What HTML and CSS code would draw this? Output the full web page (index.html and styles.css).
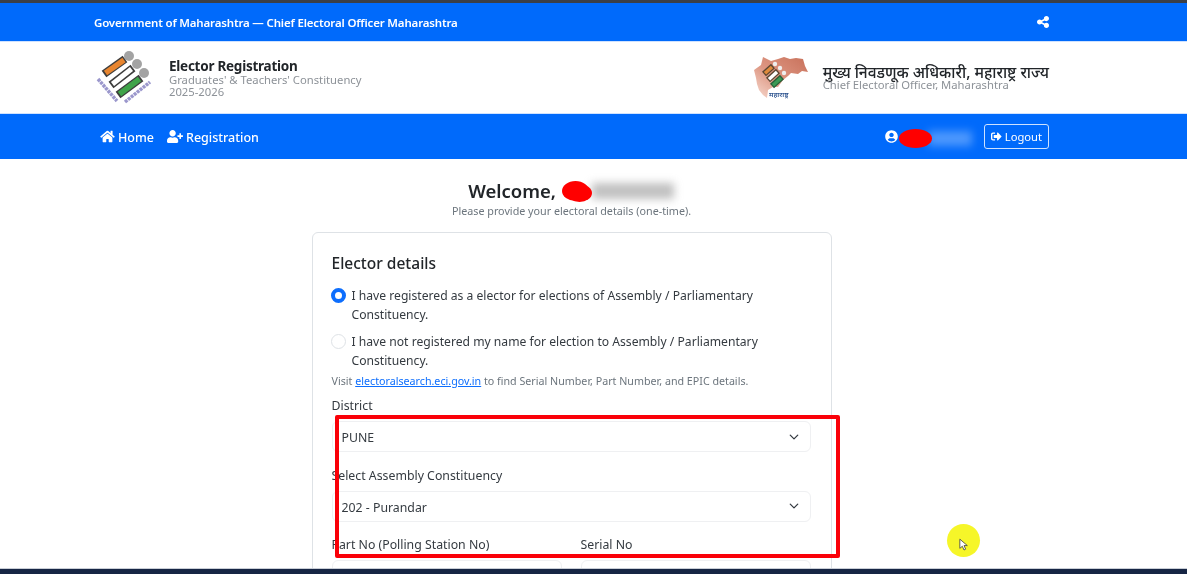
FILE: index.html
```html
<!DOCTYPE html>
<html lang="en">
<head>
<meta charset="utf-8">
<title>Elector Registration</title>
<link rel="stylesheet" href="styles.css">
</head>
<body>
<div class="page">
  <div class="topline"></div>
  <header class="gov">
    <div class="wrap gov-inner">
      <span class="gov-title">Government of Maharashtra — Chief Electoral Officer Maharashtra</span>
      <svg class="share" viewBox="0 0 448 512" width="12" height="14"><path fill="#fff" d="M352 224c53 0 96-43 96-96s-43-96-96-96-96 43-96 96c0 4 .2 8 .7 11.900l-94.100 47C145.400 170.200 121.900 160 96 160c-53 0-96 43-96 96s43 96 96 96c25.900 0 49.400-10.200 66.600-26.900l94.100 47c-.5 3.900-.7 7.800-.7 11.900 0 53 43 96 96 96s96-43 96-96-43-96-96-96c-25.900 0-49.400 10.200-66.600 26.900l-94.100-47c.5-3.900.7-7.800.7-11.900s-.2-8-.7-11.900l94.100-47C302.600 213.800 326.100 224 352 224z"/></svg>
    </div>
  </header>
  <section class="brand">
    <div class="wrap brand-inner">
      <div class="brand-left">
        <svg class="eci" viewBox="96 50 56 54" width="56" height="54">
          <g fill="#a3a3a3"><circle cx="129" cy="55" r="5"/><circle cx="137" cy="63" r="5"/><circle cx="144" cy="72" r="5"/></g>
          <g stroke-linecap="butt">
            <path d="M104 73 125 58" stroke="#3d3d3d" stroke-width="8"/><path d="M105.500 72 124 59" stroke="#e8852f" stroke-width="5.500"/>
            <path d="M111 84 133 67" stroke="#3d3d3d" stroke-width="8"/><path d="M112.500 83 131.500 68" stroke="#fff" stroke-width="5"/>
            <path d="M118 94 141 77" stroke="#3d3d3d" stroke-width="8"/><path d="M119.500 93 139.500 78" stroke="#3fa34a" stroke-width="5.500"/>
          </g>
          <g fill="none" stroke="#8a86c4" stroke-width="3.500" stroke-dasharray="3 .8" opacity=".85"><path d="M98 78 117 100"/><path d="M125 101 150 81"/></g>
        </svg>
        <div class="brand-text">
          <div class="brand-name">Elector Registration</div>
          <div class="brand-sub">Graduates' &amp; Teachers' Constituency</div>
          <div class="brand-sub">2025-2026</div>
        </div>
      </div>
      <div class="brand-right">
        <svg class="map" viewBox="752 54 58 48" width="58" height="48">
          <defs><linearGradient id="mapfill" x1="1" y1="0" x2="0" y2="1"><stop offset="0" stop-color="#c8705a"/><stop offset=".55" stop-color="#dd9682"/><stop offset="1" stop-color="#f8dcd2"/></linearGradient></defs>
          <path fill="url(#mapfill)" d="M753 70 760 65 762 57 770 61 777 59 783 57 789 59 795 58 802 59 804 66 807 72 801 71 797 74 790 73 787 76 782 80 777 87 772 87 767 90 766 98 762 95 758 90 756 84 755 78Z"/>
          <g stroke-linecap="butt">
            <path d="M763 74 772 66" stroke="#5a4632" stroke-width="6"/><path d="M764 73.200 771 67" stroke="#e08a3c" stroke-width="3.500"/>
            <path d="M767 80 777 71" stroke="#5a4632" stroke-width="6"/><path d="M768 79.200 776 72" stroke="#fff" stroke-width="3.500"/>
            <path d="M771 86 781 77" stroke="#27603a" stroke-width="6"/><path d="M772 85.200 780 78" stroke="#3a9a55" stroke-width="3.500"/>
          </g>
          <g fill="#eee"><circle cx="774" cy="64" r="2.200"/><circle cx="779" cy="68" r="2.200"/><circle cx="783" cy="73" r="2.200"/></g>
          <text x="768" y="97" class="map-label">महाराष्ट्र</text>
        </svg>
        <div class="brand-text office">
          <div class="office-name">मुख्य निवडणूक अधिकारी, महाराष्ट्र राज्य</div>
          <div class="brand-sub">Chief Electoral Officer, Maharashtra</div>
        </div>
      </div>
    </div>
  </section>
  <nav class="nav">
    <div class="wrap nav-inner">
      <div class="nav-links">
        <a class="nav-link">
          <svg viewBox="0 0 576 512" width="15" height="13"><path fill="#fff" d="M280.400 148.300 96 300.100V464a16 16 0 0 0 16 16l112-.3a16 16 0 0 0 15.900-16V368a16 16 0 0 1 16-16h64a16 16 0 0 1 16 16v95.600a16 16 0 0 0 16 16.100l112 .3a16 16 0 0 0 16-16V300L295.700 148.300a12.200 12.200 0 0 0-15.300 0zM571.600 251.500 488 182.600V44a12 12 0 0 0-12-12h-56a12 12 0 0 0-12 12v72.600L318.500 43a48 48 0 0 0-61 0L4.300 251.500a12 12 0 0 0-1.600 16.900l25.500 31A12 12 0 0 0 45.200 301l235.200-193.700a12.200 12.200 0 0 1 15.300 0L530.900 301a12 12 0 0 0 16.900-1.600l25.500-31a12 12 0 0 0-1.700-16.900z"/></svg>
          <span>Home</span>
        </a>
        <a class="nav-link">
          <svg viewBox="0 0 640 512" width="16" height="13"><path fill="#fff" d="M624 208h-64v-64c0-8.800-7.200-16-16-16h-32c-8.800 0-16 7.200-16 16v64h-64c-8.800 0-16 7.200-16 16v32c0 8.800 7.200 16 16 16h64v64c0 8.800 7.200 16 16 16h32c8.800 0 16-7.200 16-16v-64h64c8.800 0 16-7.200 16-16v-32c0-8.800-7.200-16-16-16zm-400 48c70.700 0 128-57.300 128-128S294.700 0 224 0 96 57.300 96 128s57.300 128 128 128zm89.600 32h-16.700c-22.200 10.200-46.900 16-72.900 16s-50.600-5.800-72.900-16h-16.700C60.200 288 0 348.200 0 422.400V464c0 26.500 21.500 48 48 48h352c26.500 0 48-21.500 48-48v-41.600c0-74.200-60.200-134.400-134.400-134.400z"/></svg>
          <span>Registration</span>
        </a>
      </div>
      <div class="nav-user">
        <svg viewBox="0 0 496 512" width="13" height="13"><path fill="#fff" d="M248 8C111 8 0 119 0 256s111 248 248 248 248-111 248-248S385 8 248 8zm0 96c48.600 0 88 39.400 88 88s-39.400 88-88 88-88-39.400-88-88 39.400-88 88-88zm0 344c-58.700 0-111.300-26.600-146.500-68.200 18.800-35.400 55.600-59.800 98.500-59.800 2.400 0 4.800.4 7.100 1.100 13 4.200 26.600 6.900 40.900 6.900 14.300 0 28-2.700 40.900-6.900 2.300-.7 4.700-1.100 7.100-1.100 42.900 0 79.700 24.400 98.500 59.800C359.300 421.400 306.700 448 248 448z"/></svg>
        <span class="nav-name"></span>
        <button class="logout" type="button">
          <svg viewBox="0 0 512 512" width="13" height="13"><path fill="#fff" d="M497 273 329 441c-15 15-41 4.500-41-17v-96H152c-13.300 0-24-10.700-24-24v-96c0-13.300 10.700-24 24-24h136V88c0-21.400 25.900-32 41-17l168 168c9.300 9.400 9.300 24.600 0 34zM192 436v-40c0-6.600-5.400-12-12-12H96c-17.700 0-32-14.300-32-32V160c0-17.700 14.300-32 32-32h84c6.600 0 12-5.400 12-12V76c0-6.600-5.400-12-12-12H96c-53 0-96 43-96 96v192c0 53 43 96 96 96h84c6.600 0 12-5.400 12-12z"/></svg>
          <span>Logout</span>
        </button>
      </div>
    </div>
  </nav>
  <main class="main">
    <div class="welcome">
      <h1 class="welcome-title">Welcome, <span class="welcome-name"></span></h1>
      <p class="welcome-sub">Please provide your electoral details (one-time).</p>
    </div>
    <form class="card">
      <h2 class="card-title">Elector details</h2>
      <label class="radio"><span class="dot on"></span><span>I have registered as a elector for elections of Assembly / Parliamentary Constituency.</span></label>
      <label class="radio"><span class="dot"></span><span>I have not registered my name for election to Assembly / Parliamentary Constituency.</span></label>
      <p class="hint">Visit <a class="link">electoralsearch.eci.gov.in</a> to find Serial Number, Part Number, and EPIC details.</p>
      <div class="field">
        <div class="label">District</div>
        <div class="select"><span>PUNE</span><svg viewBox="0 0 16 16" width="10" height="10"><path fill="none" stroke="#343a40" stroke-width="2" stroke-linecap="round" stroke-linejoin="round" d="m2 5 6 6 6-6"/></svg></div>
      </div>
      <div class="field">
        <div class="label">Select Assembly Constituency</div>
        <div class="select"><span>202 - Purandar</span><svg viewBox="0 0 16 16" width="10" height="10"><path fill="none" stroke="#343a40" stroke-width="2" stroke-linecap="round" stroke-linejoin="round" d="m2 5 6 6 6-6"/></svg></div>
      </div>
      <div class="row">
        <div class="field"><div class="label">Part No (Polling Station No)</div><div class="input"></div></div>
        <div class="field"><div class="label">Serial No</div><div class="input"></div></div>
      </div>
    </form>
  </main>
  <div class="taskbar"></div>
  <div class="smear smear-nav"></div>
  <div class="smear smear-title"></div>
  <div class="blob blob-nav"></div>
  <div class="blob blob-title"></div>
  <div class="highlight"></div>
  <div class="cursor-halo">
    <svg viewBox="0 0 12 16" width="10" height="14"><path fill="#fff" stroke="#444" stroke-width="1" d="M1 1v11l3-2.500 2 4.500 2-1-2-4.300h4z"/></svg>
  </div>
</div>
</body>
</html>
```
FILE: styles.css
```css
* { box-sizing: border-box; }
html, body { margin: 0; padding: 0; }
body {
  font-family: "Noto Sans", "Open Sans", "Noto Sans Devanagari", sans-serif;
  color: #212529;
  background: #fff;
}
.page {
  position: relative;
  width: 1187px;
  height: 574px;
  overflow: hidden;
  display: flex;
  flex-direction: column;
  background: #fff;
  filter: blur(0.35px);
}
.topline { height: 3px; background: #3b3f46; flex: none; }
.wrap { width: 955px; margin-left: 94px; }
.gov { background: #006afb; height: 39px; flex: none; color: #fff; border-bottom: 1px solid #cfe2ff; }
.gov-inner { height: 100%; display: flex; align-items: center; justify-content: space-between; }
.gov-title { font-size: 11.500px; font-weight: 600; letter-spacing: -0.17px; }
.share { display: block; }
.brand { height: 71px; flex: none; background: #fff; }
.brand-inner { height: 100%; display: flex; align-items: center; justify-content: space-between; }
.brand-left { display: flex; align-items: center; gap: 17px; }
.eci { display: block; flex: none; margin-left: 2px; }
.brand-text { display: flex; flex-direction: column; }
.brand-name { font-size: 13.500px; font-weight: 700; line-height: 15px; color: #212529; letter-spacing: -0.25px; padding-top: 1px; }
.brand-sub { font-size: 11.250px; line-height: 12px; color: #8d9298; }
.brand-right { display: flex; align-items: center; gap: 12px; }
.map { display: block; flex: none; }
.map-label { font-size: 7px; fill: #2f5590; font-weight: 600; }
.office-name { font-size: 15.500px; line-height: 17px; font-weight: 500; color: #212529; }
.office .brand-sub { margin-top: -2px; }
.nav { background: #006afb; height: 46px; flex: none; color: #fff; border-top: 1px solid #cfe2ff; }
.nav-inner { height: 100%; display: flex; align-items: center; justify-content: space-between; }
.nav-links { display: flex; align-items: center; gap: 13px; padding-left: 6px; }
.nav-link { display: flex; align-items: center; gap: 3px; font-size: 12.500px; font-weight: 500; }
.nav-link span { padding-top: 1px; }
.nav-link svg { display: block; }
.nav-user { display: flex; align-items: center; }
.nav-user > svg { display: block; }
.nav-name { display: block; width: 78px; }
.logout {
  display: flex;
  align-items: center;
  gap: 3px;
  height: 25px;
  width: 65px;
  padding: 0 6px;
  margin-left: 8px;
  background: transparent;
  color: #fff;
  border: 1px solid #cfe2ff;
  border-radius: 3px;
  font: inherit;
  font-size: 11.200px;
}
.main { flex: 1; min-height: 0; overflow: hidden; width: 1143px; display: flex; flex-direction: column; align-items: center; }
.welcome { text-align: center; padding-top: 19px; height: 73px; flex: none; }
.welcome-title { margin: 0; font-size: 18.500px; line-height: 26px; font-weight: 600; color: #212529; }
.welcome-name { display: inline-block; width: 114px; }
.welcome-sub { margin: 1px 0 0; font-size: 10.750px; line-height: 13px; color: #6c757d; }
.card {
  width: 520px;
  flex: none;
  border: 1px solid #dee2e6;
  border-radius: 6px;
  padding: 19px 19px 0;
}
.card-title { margin: 0 0 12px; font-size: 15.500px; line-height: 22px; font-weight: 500; }
.radio { display: flex; gap: 6px; font-size: 12.150px; line-height: 19px; color: #343a40; margin-bottom: 8px; padding-right: 30px; }
.dot { flex: none; width: 15px; height: 15px; margin: 2px 0 0 -1px; border-radius: 50%; border: 1px solid #dee2e6; background: #fff; }
.dot.on { border: 4px solid #0d6efd; }
.hint { margin: -4px 0 9px; font-size: 10.700px; line-height: 14px; color: #6c757d; }
.link { color: #0d6efd; text-decoration: underline; }
.field { display: flex; flex-direction: column; }
.label { font-size: 12.300px; line-height: 18px; color: #343a40; margin-bottom: 6px; }
.select, .input {
  height: 31px;
  border: 1px solid #eff0f2;
  border-radius: 6px;
  background: #fff;
}
.select {
  display: flex;
  align-items: center;
  justify-content: space-between;
  padding: 0 11px 0 9px;
  font-size: 12.300px;
  color: #343a40;
  margin-bottom: 14.500px;
  width: 479px;
}
.select span { padding-top: 2px; }
.row { display: grid; grid-template-columns: 230px 230px; column-gap: 19px; }
.taskbar { height: 6px; flex: none; background: #162544; border-top: 1px solid #c9ced6; }
.smear { position: absolute; filter: blur(4px); }
.smear-nav { left: 928px; top: 131px; width: 44px; height: 15px; background: rgba(140,190,255,.55); }
.smear-title { left: 592px; top: 183px; width: 82px; height: 16px; background: rgba(130,130,130,.5); }
.blob { position: absolute; background: #ff0000; }
.blob-nav { left: 899px; top: 129px; width: 33px; height: 19px; border-radius: 50%; }
.blob-title { left: 562px; top: 181px; width: 27px; height: 20px; border-radius: 50%; box-shadow: 4px 2px 0 -1px #ff0000; }
.highlight { position: absolute; left: 335px; top: 415px; width: 505px; height: 143px; border: 4px solid #fa0008; border-radius: 2px; }
.cursor-halo {
  position: absolute;
  left: 947px;
  top: 524px;
  width: 33px;
  height: 33px;
  border-radius: 50%;
  background: #f6f629;
  display: flex;
  justify-content: center;
  padding-top: 14px;
}
```
